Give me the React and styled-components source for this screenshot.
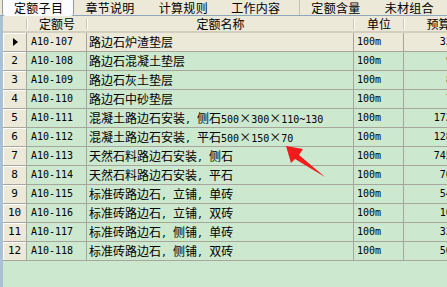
import React from "react";
import styled, { createGlobalStyle } from "styled-components";

const Global = createGlobalStyle`
  html, body { margin: 0; padding: 0; background: #ECE9D8; }
  body { overflow: hidden; }
`;

const COLS = "24px 60px 267px 50px 81px";
const LINE = "#A7A69C";
const GREEN = "#CCE8CF";
const BEIGE = "#ECE9D8";
const CJK = `"Noto Sans CJK SC", "Noto Sans", sans-serif`;
const MONO = `"DejaVu Sans Mono", "Noto Sans CJK SC", monospace`;

const Page = styled.div`
  width: 447px;
  height: 287px;
  overflow: hidden;
  display: flex;
  flex-direction: column;
  background: ${BEIGE};
  position: relative;
`;

const TabBar = styled.div`
  height: 15px;
  display: flex;
  align-items: stretch;
  padding-left: 2px;
  border-bottom: 1px solid #8EA5BD;
  background: ${BEIGE};
`;

const Tab = styled.div`
  width: ${(p) => p.$w}px;
  box-sizing: border-box;
  padding-left: 11px;
  font-family: ${CJK};
  font-size: 12px;
  letter-spacing: 0.3px;
  line-height: 15px;
  color: #000;
  white-space: nowrap;
  background: ${(p) => (p.$active ? "#FCFCFE" : "transparent")};
  border-right: ${(p) => (p.$active ? "1px solid #919B9C" : p.$sep ? "1px solid #C5C2B2" : "none")};
  border-left: ${(p) => (p.$active ? "1px solid #919B9C" : "none")};
  border-bottom-left-radius: ${(p) => (p.$active ? "3px" : "0")};
  border-bottom-right-radius: ${(p) => (p.$active ? "3px" : "0")};
  margin-bottom: ${(p) => (p.$active ? "-1px" : "0")};
`;

const Grid = styled.div`
  flex: 1;
  display: flex;
  flex-direction: column;
  background: ${GREEN};
  border-left: 3px solid #A9C0D6;
  width: 486px;
`;

const HeaderRow = styled.div`
  display: grid;
  grid-template-columns: ${COLS};
  height: 17px;
  background: ${BEIGE};
  box-sizing: border-box;
  border-bottom: 2px solid #D3CFBF;
`;

const HeadCell = styled.div`
  position: relative;
  font-family: ${CJK};
  font-size: 12px;
  line-height: 15px;
  text-align: center;
  color: #000;
  white-space: nowrap;
  &::after {
    content: "";
    position: absolute;
    right: 0;
    top: 3px;
    bottom: 2px;
    width: 1px;
    background: #C7C5B2;
    box-shadow: 1px 0 0 #fff;
  }
`;

const Row = styled.div`
  display: grid;
  grid-template-columns: ${COLS};
  height: 19px;
  background: ${(p) => (p.$current ? BEIGE : GREEN)};
`;

const RowHead = styled.div`
  box-sizing: border-box;
  background: ${BEIGE};
  border-right: 1px solid ${LINE};
  border-bottom: 1px solid ${LINE};
  box-shadow: inset 1px 1px 0 #fff;
  font-family: ${MONO};
  font-size: 11px;
  line-height: 18px;
  color: #000;
  display: flex;
  align-items: center;
  justify-content: center;
`;

const Marker = styled.span`
  width: 0;
  height: 0;
  border-top: 4px solid transparent;
  border-bottom: 4px solid transparent;
  border-left: 5px solid #000;
  margin-left: 1px;
`;

const Cell = styled.div`
  box-sizing: border-box;
  border-right: 1px solid ${LINE};
  border-bottom: 1px solid ${LINE};
  padding: 0 ${(p) => (p.$right ? "2px" : "0")} 0 ${(p) => p.$pad || 2}px;
  font-family: ${(p) => (p.$cjk ? CJK : MONO)};
  font-size: ${(p) => (p.$cjk ? "12px" : "10px")};
  line-height: 18px;
  color: #000;
  white-space: nowrap;
  overflow: hidden;
  text-align: ${(p) => (p.$right ? "right" : "left")};
`;

const Latin = styled.span`
  font-family: ${MONO};
  font-size: 10px;
`;

const Times = styled.span`
  display: inline-block;
  width: 12px;
  text-align: center;
  font-family: ${CJK};
  font-size: 12px;
`;

const Arrow = styled.svg`
  position: absolute;
  left: 0;
  top: 0;
  pointer-events: none;
`;

function Name({ text }) {
  const parts = [];
  let buf = "";
  let mode = null;
  const flush = () => {
    if (buf) parts.push({ mode, buf });
    buf = "";
  };
  for (const ch of text) {
    const m = ch === "×" ? "x" : /[\u4e00-\u9fff]/.test(ch) ? "c" : "l";
    if (m !== mode || m === "x") {
      flush();
      mode = m;
    }
    buf += ch;
  }
  flush();
  return parts.map((p, i) =>
    p.mode === "x" ? (
      <Times key={i}>×</Times>
    ) : p.mode === "l" ? (
      <Latin key={i}>{p.buf}</Latin>
    ) : (
      <span key={i}>{p.buf}</span>
    )
  );
}

const rows = [
  ["A10-107", "路边石炉渣垫层", "3256.78"],
  ["A10-108", "路边石混凝土垫层", "956.78"],
  ["A10-109", "路边石灰土垫层", "845.20"],
  ["A10-110", "路边石中砂垫层", "712.45"],
  ["A10-111", "混凝土路边石安装, 侧石500×300×110~130", "17234.56"],
  ["A10-112", "混凝土路边石安装, 平石500×150×70", "12876.40"],
  ["A10-113", "天然石料路边石安装, 侧石", "74512.30"],
  ["A10-114", "天然石料路边石安装, 平石", "7653.21"],
  ["A10-115", "标准砖路边石, 立铺, 单砖", "5432.10"],
  ["A10-116", "标准砖路边石, 立铺, 双砖", "10234.8"],
  ["A10-117", "标准砖路边石, 侧铺, 单砖", "3245.67"],
  ["A10-118", "标准砖路边石, 侧铺, 双砖", "5678.90"],
];

const tabs = [
  { label: "定额子目", w: 74, active: true },
  { label: "章节说明", w: 75 },
  { label: "计算规则", w: 74 },
  { label: "工作内容", w: 82, sep: true },
  { label: "定额含量", w: 75 },
  { label: "未材组合", w: 75 },
];

export default function App() {
  return (
    <Page>
      <Global />
      <TabBar>
        {tabs.map((t) => (
          <Tab key={t.label} $w={t.w} $active={t.active} $sep={t.sep}>
            {t.label}
          </Tab>
        ))}
      </TabBar>
      <Grid>
        <HeaderRow>
          <HeadCell />
          <HeadCell>定额号</HeadCell>
          <HeadCell>定额名称</HeadCell>
          <HeadCell>单位</HeadCell>
          <HeadCell>预算价</HeadCell>
        </HeaderRow>
        {rows.map((r, i) => (
          <Row key={r[0]} $current={i === 0}>
            <RowHead>{i === 0 ? <Marker /> : i + 1}</RowHead>
            <Cell $pad={4}>{r[0]}</Cell>
            <Cell $cjk $pad={2}>
              <Name text={r[1]} />
            </Cell>
            <Cell $pad={3}>100m</Cell>
            <Cell $right>{r[2]}</Cell>
          </Row>
        ))}
      </Grid>
      <Arrow width="447" height="287" viewBox="0 0 447 287">
        <polygon
          points="286,146 303,149 299,155 325,177 295,159 291,163"
          fill="#F21B1B"
        />
      </Arrow>
    </Page>
  );
}
